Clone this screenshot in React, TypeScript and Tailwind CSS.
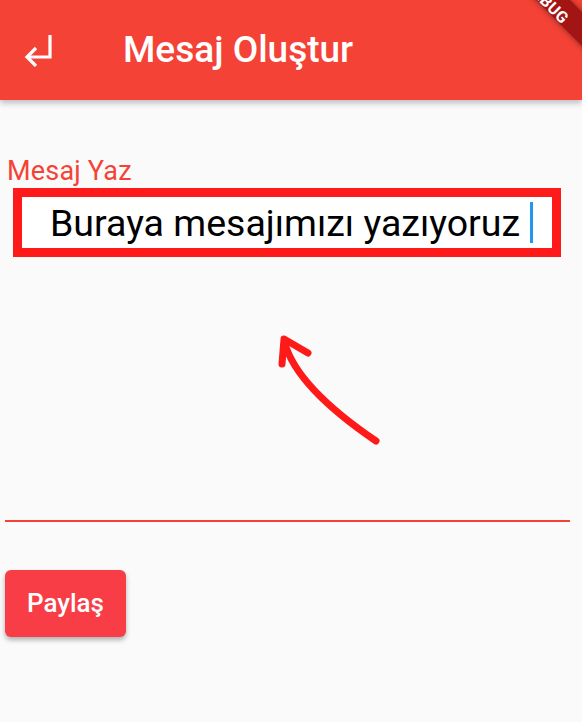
export default function App() {
  return (
    <div className="relative h-[722px] w-[582px] overflow-hidden bg-[#fafafa] font-['Roboto',sans-serif]">
      <header className="flex h-[100px] items-center bg-[#f44336] shadow-[0_3px_6px_rgba(0,0,0,0.25)]">
        <div className="flex w-[123px] items-center pl-[24px]">
          <svg width="30" height="34" viewBox="0 0 30 34" fill="none" stroke="white" strokeWidth="3.2">
            <path d="M26 2 V24 H4" />
            <path d="M12 15 L3 24 L12 33" strokeLinejoin="miter" />
          </svg>
        </div>
        <h1 className="text-[37px] font-medium text-white">Mesaj Oluştur</h1>
      </header>

      <main className="px-[5px]">
        <label className="mt-[56px] block pl-[2px] text-[27px] leading-[30px] tracking-[0.2px] text-[#f44336]">Mesaj Yaz</label>
        <div className="ml-[8px] mt-[2px] flex h-[69px] w-[548px] items-center border-[9px] border-[#ff1a1a] bg-white pl-[28px]">
          <span className="text-[37.5px] leading-[40px] text-black">Buraya mesajımızı yazıyoruz</span>
          <span className="ml-[10px] h-[41px] w-[3px] bg-[#2196f3]" />
        </div>
        <div className="mt-[263px] h-[2px] w-[565px] bg-[#f44336]" />
        <button className="mt-[48px] flex h-[67px] w-[121px] items-center justify-center rounded-[6px] bg-[#f83d47] text-[26px] font-medium text-white shadow-[0_3px_5px_rgba(0,0,0,0.3)]">
          Paylaş
        </button>
      </main>

      <svg className="absolute left-0 top-0" width="582" height="722" viewBox="0 0 582 722" fill="none">
        <path d="M376 441 Q298 388 285 344" stroke="#ff1a1a" strokeWidth="7" strokeLinecap="round" />
        <path d="M282 364 L284 339 L308 353" stroke="#ff1a1a" strokeWidth="7" strokeLinecap="round" strokeLinejoin="round" />
      </svg>

      <div className="absolute left-[485px] top-[-10px] flex h-[24px] w-[140px] rotate-45 items-center justify-center bg-[#a31515] pr-[11px] pt-[11px] shadow-[0_0_6px_rgba(0,0,0,0.45)]">
        <span className="text-[16px] font-bold leading-none tracking-wide text-white">DEBUG</span>
      </div>
    </div>
  );
}
